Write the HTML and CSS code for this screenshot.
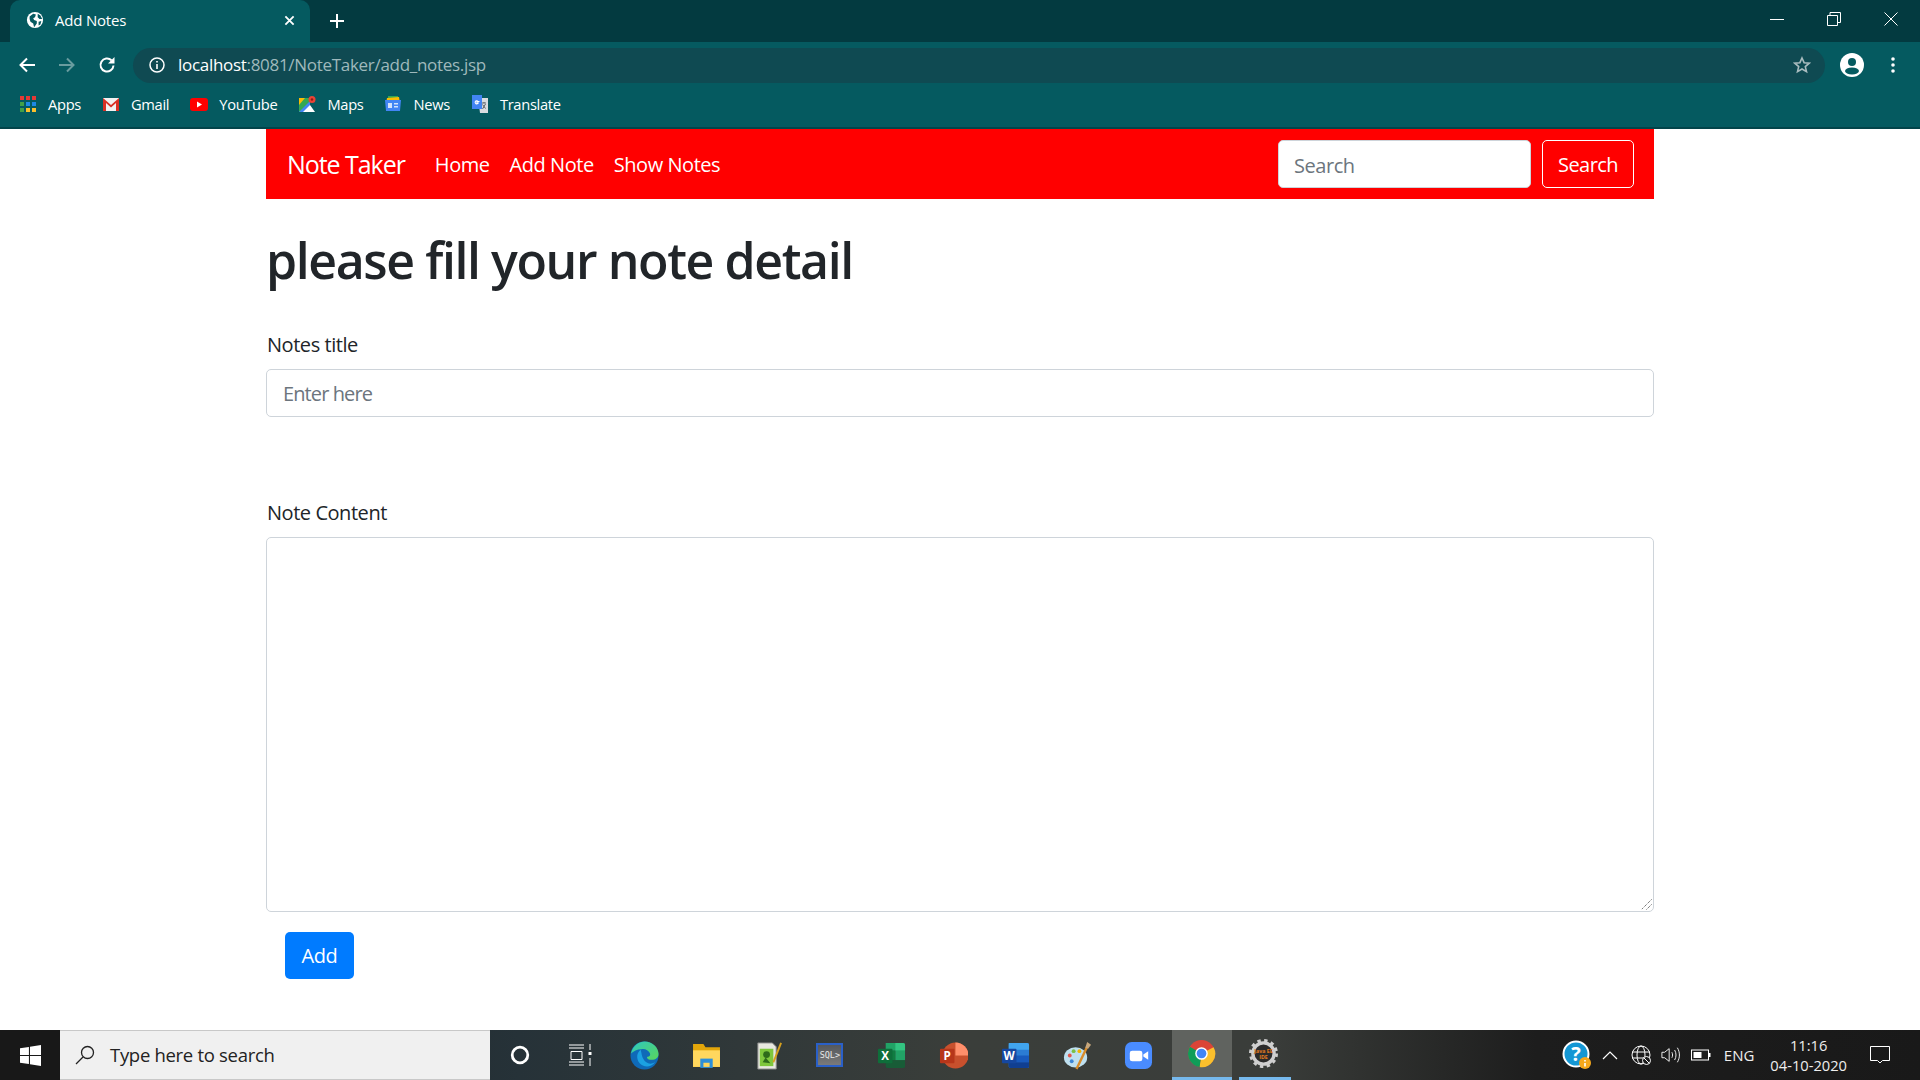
FILE: index.html
```html
<!DOCTYPE html>
<html lang="en">
<head>
<meta charset="utf-8">
<title>Add Notes</title>
<link rel="stylesheet" href="styles.css">
</head>
<body>
<div class="screen">
  <header class="browser">
    <div class="tabstrip">
      <div class="tab">
        <svg class="favicon" viewBox="0 0 20 20"><circle cx="10" cy="10" r="9" fill="#fff"/><path d="M4 6l4-3 3 1-1 3-2 1 1 2 3 1 0 3-3 4-1-4-3-2-1-3zM13 3l3 2 2 4-3 0-2-2zM14 12l3-1-1 4-2 1z" fill="#055a60"/></svg>
        <span class="tab-title">Add Notes</span>
        <svg class="tab-close" viewBox="0 0 12 12"><path d="M1.5 1.5l9 9M10.5 1.5l-9 9" stroke="#fff" stroke-width="2"/></svg>
      </div>
      <svg class="newtab" viewBox="0 0 16 16"><path d="M8 1v14M1 8h14" stroke="#fff" stroke-width="2"/></svg>
      <div class="winctl">
        <svg viewBox="0 0 14 14"><path d="M0 7.5h14" stroke="#fff"/></svg>
        <svg viewBox="0 0 14 14"><path d="M.5 3.5h10v10H.5zM3 3.5V.5h10.500v10h-3" stroke="#fff" fill="none"/></svg>
        <svg viewBox="0 0 14 14"><path d="M.5.500l13 13M13.500.5l-13 13" stroke="#fff"/></svg>
      </div>
    </div>
    <div class="toolbar">
      <svg class="navbtn" viewBox="0 0 18 18"><path d="M17 9H3M9 2.500L2.500 9 9 15.500" stroke="#fff" stroke-width="2" fill="none"/></svg>
      <svg class="navbtn dim" viewBox="0 0 18 18"><path d="M1 9h14M9 2.500L15.500 9 9 15.500" stroke="#fff" stroke-width="2" fill="none"/></svg>
      <svg class="navbtn" viewBox="0 0 18 18"><path d="M15.500 9.500a6.500 6.500 0 1 1-2-5.200" stroke="#fff" stroke-width="2" fill="none"/><path d="M16.500 1v6.500h-6.500z" fill="#fff"/></svg>
      <div class="omnibox">
        <svg class="info" viewBox="0 0 16 16"><circle cx="8" cy="8" r="7" stroke="#fff" stroke-width="1.500" fill="none"/><path d="M8 7v5M8 4v1.600" stroke="#fff" stroke-width="1.600"/></svg>
        <span class="url"><span class="host">localhost</span>:8081/NoteTaker/add_notes.jsp</span>
        <svg class="star" viewBox="0 0 18 18"><path d="M9 2l2.100 4.700 5.100.5-3.900 3.400 1.200 5L9 13l-4.500 2.600 1.200-5L1.800 7.200l5.100-.5z" stroke="#a9bcbf" stroke-width="1.600" fill="none"/></svg>
      </div>
      <svg class="profile" viewBox="0 0 24 24"><circle cx="12" cy="12" r="12" fill="#fff"/><circle cx="12" cy="9" r="4" fill="#055a60"/><ellipse cx="12" cy="18" rx="7" ry="3.500" fill="#055a60"/></svg>
      <svg class="kebab" viewBox="0 0 4 18"><circle cx="2" cy="3" r="1.800" fill="#fff"/><circle cx="2" cy="9" r="1.800" fill="#fff"/><circle cx="2" cy="15" r="1.800" fill="#fff"/></svg>
    </div>
    <nav class="bookmarks">
      <a class="bm"><svg viewBox="0 0 18 18"><g><path fill="#e53935" d="M1 1h4v4H1zM7 1h4v4H7zM13 1h4v4h-4z"/><path fill="#43a047" d="M1 7h4v4H1z"/><path fill="#1e88e5" d="M7 7h4v4H7zM13 7h4v4h-4z"/><path fill="#fbc02d" d="M7 13h4v4H7zM13 13h4v4h-4z"/><path fill="#43a047" d="M1 13h4v4H1z"/></g></svg>Apps</a>
      <a class="bm"><svg viewBox="0 0 18 18"><path d="M1 3h16v13H1z" fill="#f2f2f2"/><path d="M1 3l8 7 8-7v13h-3V8l-5 4.500L4 8v8H1z" fill="#d93025"/></svg>Gmail</a>
      <a class="bm"><svg viewBox="0 0 18 18"><rect x="0" y="3" width="18" height="13" rx="3" fill="#f00"/><path d="M7 6.500l5 3-5 3z" fill="#fff"/></svg>YouTube</a>
      <a class="bm"><svg viewBox="0 0 18 18"><path d="M1 3h11v14H1z" fill="#34a853"/><path d="M1 17L12 6v11z" fill="#4285f4"/><path d="M1 3h6L1 10z" fill="#fbbc04"/><path d="M5 17l7-7 5 7z" fill="#fff"/><circle cx="14" cy="4.500" r="3.500" fill="#ea4335"/><circle cx="14" cy="4.500" r="1.200" fill="#8c1d18"/></svg>Maps</a>
      <a class="bm"><svg viewBox="0 0 18 18"><path d="M4 1h10v5H4z" fill="#34a853"/><path d="M3 3l12-1 1 6H2z" fill="#fbbc04"/><path d="M1 5h16l-1 11H2z" fill="#4285f4"/><path d="M4 8h4v5H4zM10 8h4v1.500h-4zM10 11h4v1.500h-4z" fill="#d2e3fc"/></svg>News</a>
      <a class="bm"><svg viewBox="0 0 18 18"><path d="M7 3h10v15H9z" fill="#dadce0"/><path d="M1 0h10v14H1z" fill="#4285f4"/><path d="M8.500 6.500H6v1.500h1.200a1.600 1.600 0 1 1-.5-2" stroke="#fff" fill="none" stroke-width="1.100"/><path d="M11 8h4M13 7v1M11.500 14l3-5M11.500 9.500l3 4" stroke="#5f6368" fill="none"/></svg>Translate</a>
    </nav>
  </header>

  <main class="page">
    <div class="container">
      <div class="navbar">
        <a class="brand">Note Taker</a>
        <a class="navlink">Home</a>
        <a class="navlink">Add Note</a>
        <a class="navlink">Show Notes</a>
        <form class="navsearch">
          <input class="field search-field" type="text" placeholder="Search">
          <button class="btn-outline" type="button">Search</button>
        </form>
      </div>
      <h1 class="heading">please fill your note detail</h1>
      <form class="noteform">
        <label class="lbl">Notes title</label>
        <input class="field title-field" type="text" placeholder="Enter here">
        <label class="lbl second">Note Content</label>
        <div class="content-wrap">
          <textarea class="field content"></textarea>
          <svg class="grip" viewBox="0 0 11 11"><path d="M10.500.5l-10 10M10.500 5.500l-5 5" stroke="#444" stroke-width="1" stroke-dasharray="1 1" fill="none"/></svg>
        </div>
        <button class="btn-add" type="button">Add</button>
      </form>
    </div>
  </main>

  <footer class="taskbar">
    <div class="start"><svg viewBox="0 0 20 20"><path fill="#fff" d="M0 3l8.500-1.200v7.700H0zM9.500 1.600L20 0v9.500H9.500zM0 10.500h8.500v7.700L0 17zM9.500 10.500H20V20L9.500 18.400z"/></svg></div>
    <div class="tb-search">
      <svg viewBox="0 0 20 20"><circle cx="12.500" cy="7.500" r="6" stroke="#222" stroke-width="1.300" fill="none"/><path d="M8 12l-7 7" stroke="#222" stroke-width="1.300"/></svg>
      <span>Type here to search</span>
    </div>
    <div class="apps">
      <div class="app"><svg class="small cortana" viewBox="0 0 24 24"><circle cx="12" cy="12" r="8.500" stroke="#fff" stroke-width="3" fill="none"/></svg></div>
      <div class="app"><svg class="small taskview" viewBox="0 0 24 22"><path d="M1 1h15M1 4h15M3 7.500h11v8H3zM1 18h15M1 21h15M22 0v6M22 14v8" stroke="#fff" fill="none"/><path d="M20.500 8h3v3h-3z" fill="#fff"/></svg></div>
      <div class="app"><svg viewBox="0 0 30 30"><defs><linearGradient id="eg" x1="0" y1="0" x2="1" y2="1"><stop offset="0" stop-color="#2ec9c0"/><stop offset="1" stop-color="#5ad65a"/></linearGradient></defs><circle cx="15" cy="15" r="14.500" fill="#0f6ab8"/><path d="M1 13C3 4 10 .5 15 .5c8 0 14.500 6 14.500 13 0 4-3 6-7 6-3 0-5-1-5-3 3 0 4-2 3-4-1.500-3-5-5-9-4-4 0-8 2-10.500 4.500z" fill="url(#eg)"/><path d="M11 9c-4 3-5 9-1 14 3 3 10 6 16-1-5 3-10 1-12-3-2-3-2-7-3-10z" fill="#1ba1e2"/></svg></div>
      <div class="app"><svg viewBox="0 0 28 28"><path d="M1 3h10l2 3h14v19H1z" fill="#e3a60a"/><path d="M1 9h26v16H1z" fill="#ffd75e"/><path d="M8 17h12v9H8z" fill="#2d8fd9"/><path d="M11 21h6v4h-6z" fill="#ffd75e"/></svg></div>
      <div class="app"><svg viewBox="0 0 28 30"><path d="M3 2h15l4 4v23H3z" fill="#e8e8e0" stroke="#888"/><path d="M5 8h14v18H5z" fill="#7fc73d"/><circle cx="12" cy="14" r="3.500" fill="#2e6b1a"/><path d="M8 22l3-5 5 6z" fill="#2e6b1a"/><path d="M19 22L27 2" stroke="#d6a01e" stroke-width="2"/></svg></div>
      <div class="app"><div class="sql"><span>SQL&gt;</span></div></div>
      <div class="app"><svg viewBox="0 0 30 30"><path d="M9 2h18a2 2 0 0 1 2 2v6H9z" fill="#21a366"/><path d="M19 2h8a2 2 0 0 1 2 2v6H19z" fill="#33c481"/><path d="M9 10h10v10H9z" fill="#107c41"/><path d="M19 10h10v10H19z" fill="#21a366"/><path d="M9 20h20v6a2 2 0 0 1-2 2H11a2 2 0 0 1-2-2z" fill="#185c37"/><rect x="1" y="8" width="15" height="15" rx="1" fill="#0e6e3a"/><text class="appletter" x="8.500" y="20">X</text></svg></div>
      <div class="app"><svg viewBox="0 0 30 30"><circle cx="17" cy="15" r="13.500" fill="#c8502d"/><path d="M17 1.500A13.500 13.500 0 0 1 30.500 15H17z" fill="#ff8f6b"/><rect x="1" y="8" width="15" height="15" rx="1" fill="#b7361a"/><text class="appletter" x="8.500" y="20">P</text></svg></div>
      <div class="app"><svg viewBox="0 0 30 30"><rect x="8" y="2" width="21" height="26" rx="2" fill="#2b7cd3"/><path d="M8 2h19a2 2 0 0 1 2 2v5H8z" fill="#41a5ee"/><path d="M8 15h21v7H8z" fill="#185abd"/><path d="M8 22h21v4a2 2 0 0 1-2 2H10a2 2 0 0 1-2-2z" fill="#103f91"/><rect x="1" y="8" width="15" height="15" rx="1" fill="#15479f"/><text class="appletter" x="8.500" y="20">W</text></svg></div>
      <div class="app"><svg viewBox="0 0 30 30"><ellipse cx="13" cy="17" rx="12" ry="10.500" fill="#bfe0ef"/><circle cx="7" cy="15" r="2" fill="#e2574c"/><circle cx="11" cy="10.500" r="2" fill="#7bc043"/><circle cx="17" cy="10.500" r="2" fill="#f4b400"/><circle cx="9" cy="21" r="2" fill="#3d86d6"/><path d="M14 29L25 6" stroke="#d88c2a" stroke-width="2.500"/><path d="M23 7l2-6 4 3-3 4z" fill="#c7a77c"/></svg></div>
      <div class="app"><svg viewBox="0 0 30 30"><rect x="1" y="1" width="28" height="28" rx="7" fill="#4a8cff"/><rect x="6" y="10" width="13" height="11" rx="2.500" fill="#fff"/><path d="M20 14l5-3.500v9L20 16z" fill="#fff"/></svg></div>
      <div class="app active"><svg viewBox="0 0 30 30"><circle cx="15" cy="15" r="14" fill="#db4437"/><path d="M15 15L27.500 8.500A14 14 0 0 1 13 29z" fill="#fbc02d"/><path d="M15 15L13 29A14 14 0 0 1 3 8z" fill="#0f9d58"/><circle cx="15" cy="15" r="6.500" fill="#fff"/><circle cx="15" cy="15" r="5" fill="#4285f4"/></svg></div>
      <div class="app running"><svg viewBox="0 0 30 30"><circle cx="15" cy="15" r="11" fill="#2b2b2b" stroke="#cfcfcf" stroke-width="3.500"/><circle cx="15" cy="15" r="13.500" fill="none" stroke="#cfcfcf" stroke-width="3" stroke-dasharray="3.500 3.600"/><text class="javatext" x="15" y="14">Java EE</text><text class="javatext" x="15" y="21">IDE</text></svg></div>
    </div>
    <div class="tray">
      <svg class="tray-help" viewBox="0 0 30 30"><circle cx="14" cy="14" r="12.500" fill="#1497d4" stroke="#fff" stroke-width="2"/><text class="qmark" x="14" y="20.500">?</text><circle cx="23" cy="23" r="6" fill="#f6a81c"/><path d="M23 20v1.500M23 23v3.500" stroke="#fff" stroke-width="1.600"/></svg>
      <svg class="tray-i caret" viewBox="0 0 16 10"><path d="M1 9l7-7 7 7" stroke="#fff" stroke-width="1.200" fill="none"/></svg>
      <svg class="tray-i" viewBox="0 0 20 20"><circle cx="10" cy="10" r="9" stroke="#fff" fill="none"/><ellipse cx="10" cy="10" rx="4" ry="9" stroke="#fff" fill="none"/><path d="M1 7h18M1 13h18" stroke="#fff"/><circle cx="15.500" cy="15.500" r="4" fill="#1c1c1c" stroke="#fff"/><path d="M13 13l5 5" stroke="#fff"/></svg>
      <svg class="tray-i" viewBox="0 0 22 20"><path d="M1 7h3l5-4v14l-5-4H1z" stroke="#fff" fill="none"/><path d="M12 7c1 2 1 4 0 6M15 4.500c2 3.500 2 7.500 0 11M18 2c3 5 3 11 0 16" stroke="#fff" fill="none"/></svg>
      <svg class="tray-i" viewBox="0 0 20 12"><rect x=".5" y="1" width="17" height="10" stroke="#fff" fill="none"/><rect x="2.500" y="3" width="8" height="6" fill="#fff"/><path d="M18 4h1.500v4H18z" fill="#fff"/></svg>
      <span class="lang">ENG</span>
      <div class="clock"><span>11:16</span><span>04-10-2020</span></div>
      <svg class="notif" viewBox="0 0 20 20"><path d="M.5 1.500h19v14h-7l-2.500 2.500-2.500-2.500h-7z" stroke="#fff" fill="none"/></svg>
    </div>
  </footer>
</div>
</body>
</html>
```
FILE: styles.css
```css
* { box-sizing: border-box; }
html, body { margin: 0; height: 100%; overflow: hidden; }
body { font-family: "Open Sans", "Noto Sans", sans-serif; background: #fff; color: #212529; }
.screen { display: flex; flex-direction: column; height: 1080px; }

/* browser chrome */
.browser { flex: none; height: 129px; background: #055a60; border-bottom: 2px solid #03444a; color: #fff; }
.tabstrip { display: flex; align-items: flex-start; height: 42px; padding-left: 10px; background: #033a40; }
.tab { display: flex; align-items: center; width: 300px; height: 42px; padding: 0 15px 2px 16px; background: #055a60; border-radius: 10px 10px 0 0; }
.favicon { width: 18px; height: 18px; margin-right: 11px; }
.tab-title { font-size: 15px; letter-spacing: -.2px; flex: 1; }
.tab-close { width: 11px; height: 11px; }
.newtab { width: 16px; height: 16px; margin: 13px 0 0 19px; }
.winctl { display: flex; gap: 43px; margin: 12px 22px 0 auto; }
.winctl svg { width: 14px; height: 14px; }
.toolbar { display: flex; align-items: center; height: 43px; padding: 3px 0 0 18px; }
.navbtn { width: 18px; height: 18px; margin-right: 22px; }
.navbtn.dim { opacity: .4; }
.omnibox { display: flex; align-items: center; width: 1692px; height: 35px; margin-left: -5px; padding: 0 12px 1px 16px; background: #0f4a52; border-radius: 18px; }
.info { width: 16px; height: 16px; margin-right: 13px; }
.url { flex: 1; font-size: 17px; letter-spacing: -.3px; color: #9fb9bc; }
.host { color: #fff; }
.star { width: 18px; height: 18px; margin-right: 2px; }
.profile { width: 24px; height: 24px; margin-left: 15px; }
.kebab { width: 4px; height: 18px; margin-left: 27px; }
.bookmarks { display: flex; align-items: center; height: 42px; padding: 0 0 4px 19px; gap: 21px; }
.bm { display: flex; align-items: center; gap: 11px; font-size: 14.700px; letter-spacing: -.32px; color: #fff; }
.bm svg { width: 18px; height: 18px; }

/* page */
.page { flex: 1; background: #fff; }
.container { width: 1388px; margin: 0 auto; }
.navbar { display: flex; align-items: center; height: 70px; padding: 0 20px 0 21px; background: #f00; }
.brand { font-size: 25px; letter-spacing: -1.05px; color: #fff; margin-right: 30px; }
.navlink { font-size: 20px; letter-spacing: -.45px; color: #fff; margin-right: 20px; }
.navlink:first-of-type { letter-spacing: -.6px; }
.navsearch { display: flex; gap: 11px; margin-left: auto; }
.field { display: block; width: 100%; height: 48px; padding: 0 15px; font-family: inherit; font-size: 20px; letter-spacing: -.45px; color: #495057; background: #fff; border: 1px solid #ced4da; border-radius: 5px; outline: 0; }
.field::placeholder { color: #6c757d; opacity: 1; }
.search-field { width: 253px; padding-top: 2px; }
.title-field { padding-left: 16px; letter-spacing: -.9px; }
.btn-outline { width: 92px; height: 48px; font-family: inherit; font-size: 20px; letter-spacing: -.55px; color: #fff; background: transparent; border: 1px solid #fff; border-radius: 5px; padding: 0; }
.heading { margin: 31px 0 40px 0; font-size: 50px; line-height: 60px; font-weight: 600; letter-spacing: -1.400px; color: #212529; }
.noteform { display: block; }
.lbl { display: block; height: 30px; margin-bottom: 9px; padding-left: 1px; font-size: 20px; line-height: 30px; letter-spacing: -.45px; color: #212529; }
.second { margin-top: 81px; }
.content-wrap { position: relative; }
.content { height: 375px; resize: none; padding: 8px 15px; }
.grip { position: absolute; right: 2px; bottom: 2px; width: 11px; height: 11px; }
.btn-add { display: block; width: 69px; height: 47px; margin: 20px 0 0 19px; font-family: inherit; font-size: 20px; letter-spacing: -.4px; color: #fff; background: #007bff; border: 0; border-radius: 5px; padding: 0; }

/* taskbar */
.taskbar { flex: none; display: flex; height: 50px; background: linear-gradient(90deg, #17191b 0, #263238 27%, #3a3e3a 50%, #3a3d3a 66%, #1d1d1d 80%, #191919 100%); color: #fff; }
.start { display: flex; align-items: center; justify-content: center; width: 60px; background: #181818; }
.start svg { width: 21px; height: 21px; }
.tb-search { display: flex; align-items: center; width: 430px; padding: 0 0 1px 15px; background: #f0f0f0; border: 1px solid #c8c8c8; border-width: 1px 0; color: #222; font-size: 18.500px; letter-spacing: -.3px; }
.tb-search svg { width: 20px; height: 20px; margin-right: 15px; }
.apps { display: flex; }
.app { display: flex; align-items: center; justify-content: center; width: 61.800px; height: 50px; }
.app svg { width: 29px; height: 29px; }
.app svg.small { width: 24px; height: 22px; }
.app svg.cortana { margin-right: 2px; }
.app svg.taskview { margin-right: 6px; }
.app .sql { display: flex; align-items: center; justify-content: center; width: 27px; height: 24px; background: linear-gradient(#55585c, #7a7a7a); border: 2px solid #2a60c8; }
.sql span { font-family: "DejaVu Sans Mono", monospace; font-size: 8.500px; color: #e8e8e8; }
.appletter { font-size: 12px; font-weight: 700; fill: #fff; text-anchor: middle; }
.active { width: 60px; margin-left: 2px; background: #60635f; border-bottom: 3px solid #76b9ed; }
.running { width: 52px; margin-left: 7px; border-bottom: 3px solid #76b9ed; }
.running svg { margin-left: -2px; }
.javatext { font-size: 5.500px; font-weight: 700; fill: #e07a1f; text-anchor: middle; }
.tray { display: flex; align-items: center; margin-left: auto; padding-right: 30px; }
.tray-help { width: 30px; height: 30px; margin-right: 10px; }
.qmark { font-size: 20px; font-weight: 700; fill: #fff; text-anchor: middle; }
.tray-i { width: 20px; height: 20px; margin-right: 10px; }
.caret { width: 16px; height: 10px; margin-right: 13px; }
.lang { font-size: 15px; margin: 0 16px 0 3px; color: #eee; }
.clock { display: flex; flex-direction: column; align-items: center; font-size: 14.700px; line-height: 20px; color: #eee; margin-right: 23px; }
.notif { width: 20px; height: 20px; }
```
